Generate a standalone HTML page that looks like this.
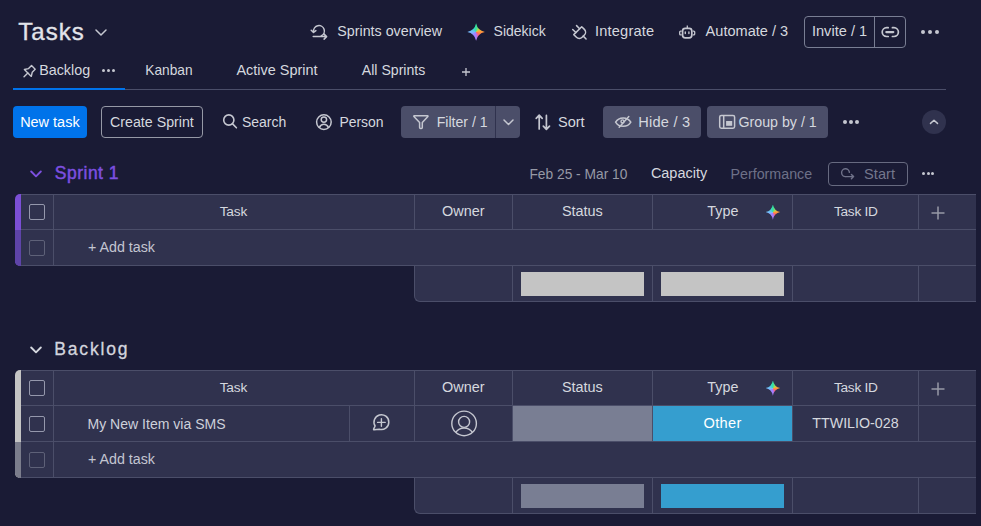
<!DOCTYPE html>
<html><head><meta charset="utf-8"><title>Tasks</title>
<style>
html,body{margin:0;padding:0;}
body{width:981px;height:526px;overflow:hidden;background:#1a1b35;position:relative;font-family:"Liberation Sans",sans-serif;}
.a{position:absolute;}
.t{position:absolute;white-space:pre;line-height:1;}
</style></head><body>
<div class="t" style="left:18.30px;top:19.68px;font-size:24px;color:#e2e4ea;letter-spacing:1px;-webkit-text-stroke:0.35px #e2e4ea;">Tasks</div>
<svg class="a" style="left:95px;top:29px" width="12" height="7" viewBox="0 0 12 7" fill="none"><path d="M1 1L6 6L11 1" stroke="#c5c7d0" stroke-width="1.5" stroke-linecap="round" stroke-linejoin="round"/></svg>
<svg class="a" style="left:305px;top:18px" width="30" height="28" viewBox="0 0 30 28" fill="none"><path d="M8.6 13.6A5.4 5.4 0 1 1 16.2 17.9" stroke="#c5c7d0" stroke-width="1.5" stroke-linecap="round"/><path d="M6.2 12.3L8.5 14.4L10.9 12.6M8.2 18.6H21.6M19.1 16.1L21.6 18.6L19.1 21.1" stroke="#c5c7d0" stroke-width="1.5" stroke-linecap="round" stroke-linejoin="round"/></svg>
<div class="t" style="left:337.29px;top:23.87px;font-size:14.27px;color:#d5d8df;">Sprints overview</div>
<div class="a" style="left:467.30px;top:23.30px;width:17.60px;height:17.40px;background:conic-gradient(from 0deg at 50% 50%, #2ee3a0 0deg, #b5d84a 45deg, #ffa238 80deg, #ff7a48 110deg, #ff5f7e 140deg, #a47cff 180deg, #9a86ff 225deg, #78bcff 270deg, #45d2d0 320deg, #2ee3a0 360deg);clip-path:path('M8.8 0Q10.30 7.22 17.6 8.7Q10.30 10.18 8.8 17.4Q7.30 10.18 0 8.7Q7.30 7.22 8.8 0Z');"></div>
<div class="t" style="left:493.60px;top:24.00px;font-size:14.01px;color:#d5d8df;">Sidekick</div>
<svg class="a" style="left:566px;top:18px" width="30" height="28" viewBox="0 0 30 28" fill="none"><g transform="translate(14 14.9) rotate(-45)"><path d="M-5.6 -3.2V0.6A4 4 0 0 0 -1.6 4.6H1.6A4 4 0 0 0 5.6 0.6V-3.2Z" stroke="#c5c7d0" stroke-width="1.5" stroke-linejoin="round"/><path d="M-2.7 -3.2V-7.6M2.7 -3.2V-7.6M0 4.6V8.6" stroke="#c5c7d0" stroke-width="1.5" stroke-linecap="round"/></g></svg>
<div class="t" style="left:594.89px;top:23.70px;font-size:14.60px;color:#d5d8df;letter-spacing:0.21px;">Integrate</div>
<svg class="a" style="left:673px;top:18px" width="30" height="28" viewBox="0 0 30 28" fill="none"><rect x="9.6" y="10.4" width="9.2" height="9.4" rx="2.6" stroke="#c5c7d0" stroke-width="1.7"/><path d="M14.3 7.6V10.2" stroke="#c5c7d0" stroke-width="1.3"/><path d="M8.7 13.2H7.6A0.9 0.9 0 0 0 6.7 14.1V15.9A0.9 0.9 0 0 0 7.6 16.8H8.7M19.7 13.2H20.8A0.9 0.9 0 0 1 21.7 14.1V15.9A0.9 0.9 0 0 1 20.8 16.8H19.7" stroke="#c5c7d0" stroke-width="1.3"/><rect x="11.6" y="13.3" width="1.4" height="3" rx="0.7" fill="#c5c7d0"/><rect x="15.2" y="13.3" width="1.4" height="3" rx="0.7" fill="#c5c7d0"/></svg>
<div class="t" style="left:705.60px;top:23.73px;font-size:14.55px;color:#d5d8df;">Automate / 3</div>
<div class="a" style="left:804px;top:16px;width:102px;height:32px;box-sizing:border-box;border:1px solid #797e93;border-radius:4px;"></div>
<div class="a" style="left:874px;top:17px;width:1px;height:30px;background:#797e93;"></div>
<div class="t" style="left:811.89px;top:23.70px;font-size:14.60px;color:#d5d8df;letter-spacing:0.02px;">Invite / 1</div>
<svg class="a" style="left:876px;top:18px" width="30" height="28" viewBox="0 0 30 28" fill="none"><path d="M12.2 9.7H10.6A4.4 4.4 0 0 0 10.6 18.5H12.2M16.4 9.7H18A4.4 4.4 0 0 1 18 18.5H16.4" stroke="#c5c7d0" stroke-width="1.7" stroke-linecap="round"/><path d="M10.3 14.1H17.3" stroke="#c5c7d0" stroke-width="2.2" stroke-linecap="round"/></svg>
<div class="a" style="left:921px;top:30px;width:4px;height:4px;border-radius:50%;background:#c5c7d0;"></div>
<div class="a" style="left:928px;top:30px;width:4px;height:4px;border-radius:50%;background:#c5c7d0;"></div>
<div class="a" style="left:935px;top:30px;width:4px;height:4px;border-radius:50%;background:#c5c7d0;"></div>
<svg class="a" style="left:16px;top:57px" width="30" height="28" viewBox="0 0 30 28" fill="none"><g transform="translate(12.7 15.1) rotate(45)"><path d="M-2.6 -6.6H2.6V-2.4L4.9 1.2H-4.9L-2.6 -2.4Z" stroke="#c5c7d0" stroke-width="1.4" stroke-linejoin="round"/><path d="M0 1.2V6.6" stroke="#c5c7d0" stroke-width="1.4" stroke-linecap="round"/></g></svg>
<div class="t" style="left:39.15px;top:62.83px;font-size:14.34px;color:#d5d8df;">Backlog</div>
<div class="a" style="left:102px;top:69px;width:3px;height:3px;border-radius:50%;background:#c5c7d0;"></div>
<div class="a" style="left:107px;top:69px;width:3px;height:3px;border-radius:50%;background:#c5c7d0;"></div>
<div class="a" style="left:112px;top:69px;width:3px;height:3px;border-radius:50%;background:#c5c7d0;"></div>
<div class="t" style="left:145.30px;top:63.64px;font-size:13.73px;color:#d5d8df;">Kanban</div>
<div class="t" style="left:236.40px;top:62.77px;font-size:14.46px;color:#d5d8df;">Active Sprint</div>
<div class="t" style="left:361.80px;top:62.94px;font-size:14.12px;color:#d5d8df;">All Sprints</div>
<svg class="a" style="left:461px;top:67px" width="10" height="10" viewBox="0 0 10 10" fill="none"><path d="M5 1V9M1 5H9" stroke="#c5c7d0" stroke-width="1.3"/></svg>
<div class="a" style="left:13px;top:89px;width:933px;height:1px;background:#4b4e69;"></div>
<div class="a" style="left:13px;top:88px;width:112px;height:2px;background:#0073ea;"></div>
<div class="a" style="left:13px;top:106px;width:74px;height:32px;background:#0073ea;border-radius:4px;"></div>
<div class="t" style="left:20.14px;top:114.77px;font-size:14.47px;color:#ffffff;">New task</div>
<div class="a" style="left:101px;top:106px;width:102px;height:32px;box-sizing:border-box;border:1px solid #9699a6;border-radius:4px;"></div>
<div class="t" style="left:110.09px;top:114.89px;font-size:14.21px;color:#d5d8df;">Create Sprint</div>
<svg class="a" style="left:216px;top:108px" width="30" height="28" viewBox="0 0 30 28" fill="none"><circle cx="12.8" cy="12" r="5.1" stroke="#c5c7d0" stroke-width="1.6"/><path d="M16.6 15.9L20.4 19.8" stroke="#c5c7d0" stroke-width="1.6" stroke-linecap="round"/></svg>
<div class="t" style="left:241.90px;top:114.98px;font-size:14.03px;color:#d5d8df;">Search</div>
<svg class="a" style="left:309px;top:108px" width="30" height="28" viewBox="0 0 30 28" fill="none"><circle cx="14.9" cy="14.1" r="7.3" stroke="#c5c7d0" stroke-width="1.5"/><circle cx="14.9" cy="11.6" r="2.7" stroke="#c5c7d0" stroke-width="1.5"/><path d="M10.3 19.6C11.3 17.4 12.9 16.3 14.9 16.3C16.9 16.3 18.5 17.4 19.5 19.6" stroke="#c5c7d0" stroke-width="1.5"/></svg>
<div class="t" style="left:339.38px;top:115.51px;font-size:13.97px;color:#d5d8df;">Person</div>
<div class="a" style="left:401px;top:106px;width:119px;height:32px;background:#4b4e69;border-radius:4px;"></div>
<div class="a" style="left:495px;top:106px;width:1px;height:32px;background:#30324e;"></div>
<svg class="a" style="left:406px;top:108px" width="30" height="28" viewBox="0 0 30 28" fill="none"><path d="M8.2 7.8H21.6Q22.3 7.8 21.9 8.5L16.3 14.6V19.4Q16.3 20.4 15.3 20.4H14.6Q13.6 20.4 13.6 19.4V14.6L7.9 8.5Q7.5 7.8 8.2 7.8Z" stroke="#c5c7d0" stroke-width="1.5" stroke-linejoin="round"/></svg>
<div class="t" style="left:436.67px;top:114.93px;font-size:14.14px;color:#d5d8df;">Filter / 1</div>
<svg class="a" style="left:503px;top:119px" width="11" height="7" viewBox="0 0 11 7" fill="none"><path d="M1 1L5.5 5.5L10 1" stroke="#c5c7d0" stroke-width="1.5" stroke-linecap="round" stroke-linejoin="round"/></svg>
<svg class="a" style="left:528px;top:108px" width="30" height="28" viewBox="0 0 30 28" fill="none"><path d="M11.2 21V7.4M8.2 10.3L11.2 7.2L14.2 10.3M18.4 7.4V21M15.3 18.2L18.4 21.3L21.5 18.2" stroke="#c5c7d0" stroke-width="1.7" stroke-linecap="round" stroke-linejoin="round"/></svg>
<div class="t" style="left:557.97px;top:114.72px;font-size:14.55px;color:#d5d8df;">Sort</div>
<div class="a" style="left:603px;top:106px;width:98px;height:32px;background:#4b4e69;border-radius:4px;"></div>
<svg class="a" style="left:608px;top:108px" width="30" height="28" viewBox="0 0 30 28" fill="none"><path d="M7.6 14.1C9.4 11.1 12 9.9 15.2 9.9C18.4 9.9 21 11.1 22.8 14.1C21 17.1 18.4 18.3 15.2 18.3C12 18.3 9.4 17.1 7.6 14.1Z" stroke="#c5c7d0" stroke-width="1.5"/><circle cx="14.5" cy="13.4" r="1.5" stroke="#c5c7d0" stroke-width="1.4"/><path d="M20.8 8.6L11.2 19.2" stroke="#c5c7d0" stroke-width="1.5" stroke-linecap="round"/></svg>
<div class="t" style="left:638.13px;top:114.70px;font-size:14.60px;color:#d5d8df;letter-spacing:0.25px;">Hide / 3</div>
<div class="a" style="left:707px;top:106px;width:121px;height:32px;background:#4b4e69;border-radius:4px;"></div>
<svg class="a" style="left:712px;top:108px" width="30" height="28" viewBox="0 0 30 28" fill="none"><rect x="7.7" y="7.5" width="14.9" height="12.7" rx="1.6" stroke="#c5c7d0" stroke-width="1.5"/><path d="M11.7 7.8V19.9" stroke="#c5c7d0" stroke-width="1.5"/><rect x="14.1" y="13" width="6.1" height="4.8" fill="#c5c7d0"/></svg>
<div class="t" style="left:738.49px;top:114.89px;font-size:14.22px;color:#d5d8df;">Group by / 1</div>
<div class="a" style="left:843px;top:120px;width:4px;height:4px;border-radius:50%;background:#c5c7d0;"></div>
<div class="a" style="left:849px;top:120px;width:4px;height:4px;border-radius:50%;background:#c5c7d0;"></div>
<div class="a" style="left:855px;top:120px;width:4px;height:4px;border-radius:50%;background:#c5c7d0;"></div>
<div class="a" style="left:922px;top:110px;width:24px;height:24px;background:#30324e;border-radius:50%;"></div>
<svg class="a" style="left:929px;top:118px" width="10" height="8" viewBox="0 0 10 8" fill="none"><path d="M1.5 5.4L5 2.3L8.5 5.4" stroke="#c5c7d0" stroke-width="1.5" stroke-linecap="round" stroke-linejoin="round"/></svg>
<svg class="a" style="left:30px;top:170px" width="12" height="8" viewBox="0 0 12 8" fill="none"><path d="M1.2 1.5L6 6.3L10.8 1.5" stroke="#7d50e0" stroke-width="1.9" stroke-linecap="round" stroke-linejoin="round"/></svg>
<div class="t" style="left:54.73px;top:164.85px;font-size:17.50px;color:#7d50e0;letter-spacing:0.51px;-webkit-text-stroke:0.45px #7d50e0;">Sprint 1</div>
<div class="t" style="left:529.40px;top:167.60px;font-size:13.79px;color:#9699a6;">Feb 25 - Mar 10</div>
<div class="t" style="left:650.88px;top:165.76px;font-size:14.48px;color:#d5d8df;">Capacity</div>
<div class="t" style="left:730.56px;top:166.88px;font-size:14.25px;color:#6e7188;">Performance</div>
<div class="a" style="left:828px;top:162px;width:80px;height:24px;box-sizing:border-box;border:1px solid #676a80;border-radius:4px;"></div>
<svg class="a" style="left:834px;top:160px" width="30" height="28" viewBox="0 0 30 28" fill="none"><path d="M15.4 12.4A3.9 3.9 0 1 0 11.8 16.6" stroke="#70738a" stroke-width="1.4" stroke-linecap="round" fill="none"/><path d="M11.8 16.6H19.6M17.4 14.4L19.6 16.6L17.4 18.8" stroke="#70738a" stroke-width="1.4" stroke-linecap="round" stroke-linejoin="round" fill="none"/></svg>
<div class="t" style="left:864.07px;top:166.70px;font-size:14.60px;color:#74778d;letter-spacing:0.03px;">Start</div>
<div class="a" style="left:922.0px;top:172px;width:3px;height:3px;border-radius:50%;background:#c5c7d0;"></div>
<div class="a" style="left:926.5px;top:172px;width:3px;height:3px;border-radius:50%;background:#c5c7d0;"></div>
<div class="a" style="left:931.0px;top:172px;width:3px;height:3px;border-radius:50%;background:#c5c7d0;"></div>
<div class="a" style="left:15px;top:194px;width:6px;height:72px;background:#7b4fd6;border-radius:5px 0 0 5px;"></div>
<div class="a" style="left:21px;top:194px;width:955px;height:72px;background:#30324e;"></div>
<div class="a" style="left:21px;top:194px;width:955px;height:1px;background:#4b4e69;"></div>
<div class="a" style="left:21px;top:229px;width:955px;height:1px;background:#4b4e69;"></div>
<div class="a" style="left:21px;top:265px;width:955px;height:1px;background:#4b4e69;"></div>
<div class="a" style="left:19px;top:265px;width:4px;height:1px;background:#4b4e69;"></div>
<div class="a" style="left:53px;top:194px;width:1px;height:36px;background:#4b4e69;"></div>
<div class="a" style="left:414px;top:194px;width:1px;height:36px;background:#4b4e69;"></div>
<div class="a" style="left:512px;top:194px;width:1px;height:36px;background:#4b4e69;"></div>
<div class="a" style="left:652px;top:194px;width:1px;height:36px;background:#4b4e69;"></div>
<div class="a" style="left:792px;top:194px;width:1px;height:36px;background:#4b4e69;"></div>
<div class="a" style="left:918px;top:194px;width:1px;height:36px;background:#4b4e69;"></div>
<div class="t" style="left:219.63px;top:204.65px;font-size:13.70px;color:#d5d8df;letter-spacing:-0.14px;">Task</div>
<div class="t" style="left:441.98px;top:203.78px;font-size:14.44px;color:#d5d8df;">Owner</div>
<div class="t" style="left:561.88px;top:203.78px;font-size:14.44px;color:#d5d8df;">Status</div>
<div class="t" style="left:707.31px;top:203.83px;font-size:14.33px;color:#d5d8df;">Type</div>
<div class="t" style="left:834.03px;top:204.65px;font-size:13.70px;color:#d5d8df;letter-spacing:-0.30px;">Task ID</div>
<div class="a" style="left:765.60px;top:204.50px;width:14.60px;height:15.20px;background:conic-gradient(from 0deg at 50% 50%, #2ee3a0 0deg, #b5d84a 45deg, #ffa238 80deg, #ff7a48 110deg, #ff5f7e 140deg, #a47cff 180deg, #9a86ff 225deg, #78bcff 270deg, #45d2d0 320deg, #2ee3a0 360deg);clip-path:path('M7.3 0Q8.54 6.31 14.6 7.6Q8.54 8.89 7.3 15.2Q6.06 8.89 0 7.6Q6.06 6.31 7.3 0Z');"></div>
<svg class="a" style="left:931px;top:206px" width="14" height="14" viewBox="0 0 14 14" fill="none"><path d="M7 0.5V13.5M0.5 7H13.5" stroke="#9699a6" stroke-width="1.5"/></svg>
<div class="a" style="left:29px;top:204px;width:16px;height:16px;box-sizing:border-box;border:1px solid #9598ac;border-radius:2px;"></div>
<div class="a" style="left:15px;top:230px;width:6px;height:36px;background:#5e44a8;border-bottom-left-radius:5px;"></div>
<div class="a" style="left:53px;top:230px;width:1px;height:36px;background:#4b4e69;"></div>
<div class="a" style="left:29px;top:240px;width:16px;height:16px;box-sizing:border-box;border:1px solid #5e6178;border-radius:2px;"></div>
<div class="t" style="left:87.99px;top:239.87px;font-size:14.26px;color:#c3c5d1;">+ Add task</div>
<div class="a" style="left:414px;top:266px;width:562px;height:36px;box-sizing:border-box;background:#30324e;border:1px solid #4b4e69;border-top:none;border-right:none;border-radius:0 0 0 6px;"></div>
<div class="a" style="left:512px;top:266px;width:1px;height:35px;background:#4b4e69;"></div>
<div class="a" style="left:652px;top:266px;width:1px;height:35px;background:#4b4e69;"></div>
<div class="a" style="left:792px;top:266px;width:1px;height:35px;background:#4b4e69;"></div>
<div class="a" style="left:918px;top:266px;width:1px;height:35px;background:#4b4e69;"></div>
<div class="a" style="left:521px;top:272px;width:123px;height:24px;background:#c4c4c4;"></div>
<div class="a" style="left:661px;top:272px;width:123px;height:24px;background:#c4c4c4;"></div>
<svg class="a" style="left:30px;top:346px" width="12" height="8" viewBox="0 0 12 8" fill="none"><path d="M1.2 1.5L6 6.3L10.8 1.5" stroke="#d5d8df" stroke-width="1.9" stroke-linecap="round" stroke-linejoin="round"/></svg>
<div class="t" style="left:54.30px;top:340.75px;font-size:17.50px;color:#d3d5de;letter-spacing:1.82px;-webkit-text-stroke:0.3px #d3d5de;">Backlog</div>
<div class="a" style="left:15px;top:370px;width:6px;height:108px;background:#c4c4c4;border-radius:5px 0 0 5px;"></div>
<div class="a" style="left:21px;top:370px;width:955px;height:108px;background:#30324e;"></div>
<div class="a" style="left:21px;top:370px;width:955px;height:1px;background:#4b4e69;"></div>
<div class="a" style="left:21px;top:405px;width:955px;height:1px;background:#4b4e69;"></div>
<div class="a" style="left:21px;top:441px;width:955px;height:1px;background:#4b4e69;"></div>
<div class="a" style="left:21px;top:477px;width:955px;height:1px;background:#4b4e69;"></div>
<div class="a" style="left:19px;top:477px;width:4px;height:1px;background:#4b4e69;"></div>
<div class="a" style="left:53px;top:370px;width:1px;height:36px;background:#4b4e69;"></div>
<div class="a" style="left:414px;top:370px;width:1px;height:36px;background:#4b4e69;"></div>
<div class="a" style="left:512px;top:370px;width:1px;height:36px;background:#4b4e69;"></div>
<div class="a" style="left:652px;top:370px;width:1px;height:36px;background:#4b4e69;"></div>
<div class="a" style="left:792px;top:370px;width:1px;height:36px;background:#4b4e69;"></div>
<div class="a" style="left:918px;top:370px;width:1px;height:36px;background:#4b4e69;"></div>
<div class="t" style="left:219.63px;top:380.65px;font-size:13.70px;color:#d5d8df;letter-spacing:-0.14px;">Task</div>
<div class="t" style="left:441.98px;top:379.78px;font-size:14.44px;color:#d5d8df;">Owner</div>
<div class="t" style="left:561.88px;top:379.78px;font-size:14.44px;color:#d5d8df;">Status</div>
<div class="t" style="left:707.31px;top:379.83px;font-size:14.33px;color:#d5d8df;">Type</div>
<div class="t" style="left:834.03px;top:380.65px;font-size:13.70px;color:#d5d8df;letter-spacing:-0.30px;">Task ID</div>
<div class="a" style="left:765.60px;top:380.50px;width:14.60px;height:15.20px;background:conic-gradient(from 0deg at 50% 50%, #2ee3a0 0deg, #b5d84a 45deg, #ffa238 80deg, #ff7a48 110deg, #ff5f7e 140deg, #a47cff 180deg, #9a86ff 225deg, #78bcff 270deg, #45d2d0 320deg, #2ee3a0 360deg);clip-path:path('M7.3 0Q8.54 6.31 14.6 7.6Q8.54 8.89 7.3 15.2Q6.06 8.89 0 7.6Q6.06 6.31 7.3 0Z');"></div>
<svg class="a" style="left:931px;top:382px" width="14" height="14" viewBox="0 0 14 14" fill="none"><path d="M7 0.5V13.5M0.5 7H13.5" stroke="#9699a6" stroke-width="1.5"/></svg>
<div class="a" style="left:29px;top:380px;width:16px;height:16px;box-sizing:border-box;border:1px solid #9598ac;border-radius:2px;"></div>
<div class="a" style="left:53px;top:406px;width:1px;height:36px;background:#4b4e69;"></div>
<div class="a" style="left:349px;top:406px;width:1px;height:36px;background:#4b4e69;"></div>
<div class="a" style="left:414px;top:406px;width:1px;height:36px;background:#4b4e69;"></div>
<div class="a" style="left:512px;top:406px;width:1px;height:36px;background:#4b4e69;"></div>
<div class="a" style="left:652px;top:406px;width:1px;height:36px;background:#4b4e69;"></div>
<div class="a" style="left:792px;top:406px;width:1px;height:36px;background:#4b4e69;"></div>
<div class="a" style="left:918px;top:406px;width:1px;height:36px;background:#4b4e69;"></div>
<div class="a" style="left:29px;top:416px;width:16px;height:16px;box-sizing:border-box;border:1px solid #9598ac;border-radius:2px;"></div>
<div class="t" style="left:87.48px;top:416.97px;font-size:14.06px;color:#cdd0da;">My New Item via SMS</div>
<svg class="a" style="left:366px;top:408px" width="30" height="28" viewBox="0 0 30 28" fill="none"><path d="M9.1 18A7.4 7.4 0 1 1 13.3 21.2L8.2 21.7Q7.3 21.8 7.7 20.9Z" stroke="#c5c7d0" stroke-width="1.5" stroke-linejoin="round"/><path d="M15.4 10.6V18.2M11.6 14.4H19.2" stroke="#c5c7d0" stroke-width="1.4" stroke-linecap="round"/></svg>
<svg class="a" style="left:446px;top:406px" width="36" height="36" viewBox="0 0 36 36" fill="none"><circle cx="18.1" cy="17.4" r="12.3" stroke="#c5c7d0" stroke-width="1.4"/><circle cx="18.1" cy="15.9" r="5.5" stroke="#c5c7d0" stroke-width="1.4"/><path d="M9.8 26.4A10 10 0 0 1 26.4 26.4" stroke="#c5c7d0" stroke-width="1.4"/></svg>
<div class="a" style="left:513px;top:406px;width:139px;height:35px;background:#797e93;"></div>
<div class="a" style="left:653px;top:406px;width:139px;height:35px;background:#359ecf;"></div>
<div class="t" style="left:703.57px;top:415.70px;font-size:14.60px;color:#ffffff;letter-spacing:0.31px;">Other</div>
<div class="t" style="left:812.31px;top:415.87px;font-size:14.26px;color:#d5d8df;">TTWILIO-028</div>
<div class="a" style="left:15px;top:442px;width:6px;height:36px;background:#7b7d8c;border-bottom-left-radius:5px;"></div>
<div class="a" style="left:53px;top:442px;width:1px;height:36px;background:#4b4e69;"></div>
<div class="a" style="left:29px;top:452px;width:16px;height:16px;box-sizing:border-box;border:1px solid #5e6178;border-radius:2px;"></div>
<div class="t" style="left:87.99px;top:451.87px;font-size:14.26px;color:#c3c5d1;">+ Add task</div>
<div class="a" style="left:414px;top:478px;width:562px;height:36px;box-sizing:border-box;background:#30324e;border:1px solid #4b4e69;border-top:none;border-right:none;border-radius:0 0 0 6px;"></div>
<div class="a" style="left:512px;top:478px;width:1px;height:35px;background:#4b4e69;"></div>
<div class="a" style="left:652px;top:478px;width:1px;height:35px;background:#4b4e69;"></div>
<div class="a" style="left:792px;top:478px;width:1px;height:35px;background:#4b4e69;"></div>
<div class="a" style="left:918px;top:478px;width:1px;height:35px;background:#4b4e69;"></div>
<div class="a" style="left:521px;top:484px;width:123px;height:24px;background:#797e93;"></div>
<div class="a" style="left:661px;top:484px;width:123px;height:24px;background:#359ecf;"></div>
</body></html>
